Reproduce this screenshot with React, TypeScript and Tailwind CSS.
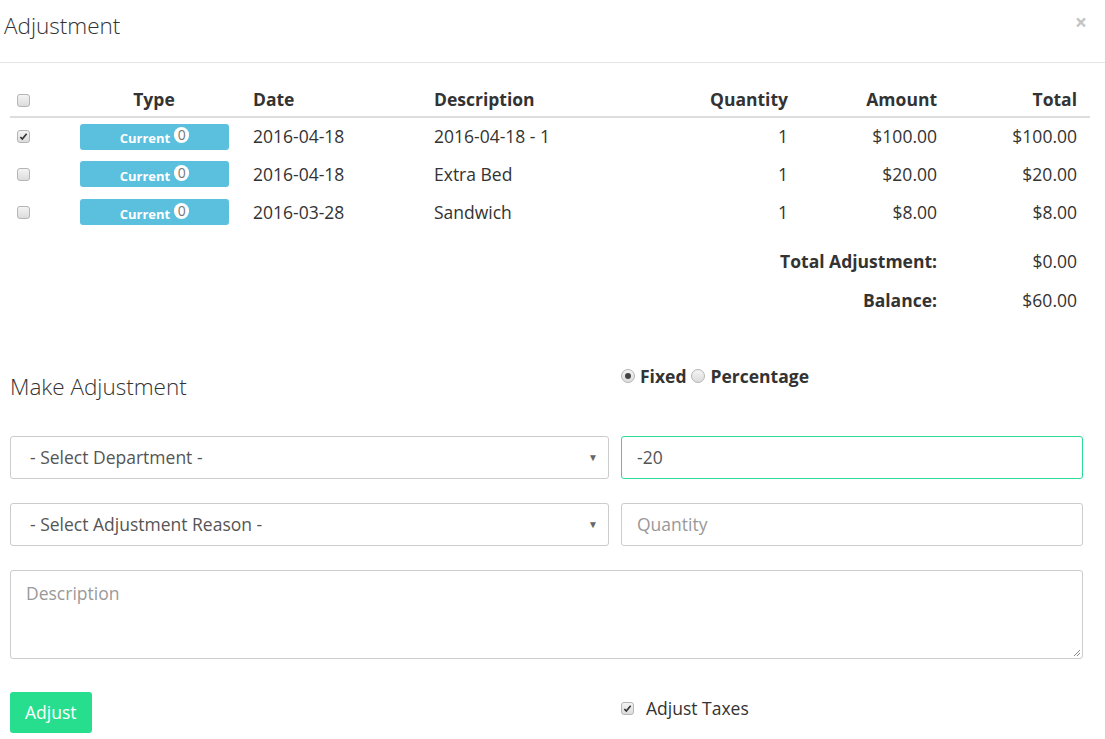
function Check({ checked }: { checked?: boolean }) {
  return (
    <span className="inline-flex h-[13px] w-[13px] items-center justify-center rounded-[3px] border border-[#b5b5b5] bg-gradient-to-b from-[#f4f4f4] to-[#dcdcdc]">
      {checked && (
        <svg width="9" height="9" viewBox="0 0 10 10">
          <path d="M1.5 5.5l2.2 2.3L8.5 2" fill="none" stroke="#333" strokeWidth="1.8" />
        </svg>
      )}
    </span>
  );
}

function Radio({ checked }: { checked?: boolean }) {
  return (
    <span className="inline-flex h-[14px] w-[14px] items-center justify-center rounded-full border border-[#b5b5b5] bg-gradient-to-b from-[#f4f4f4] to-[#dcdcdc]">
      {checked && <span className="h-[6px] w-[6px] rounded-full bg-[#444]" />}
    </span>
  );
}

const rows = [
  { checked: true, date: "2016-04-18", desc: "2016-04-18 - 1", qty: "1", amount: "$100.00", total: "$100.00" },
  { checked: false, date: "2016-04-18", desc: "Extra Bed", qty: "1", amount: "$20.00", total: "$20.00" },
  { checked: false, date: "2016-03-28", desc: "Sandwich", qty: "1", amount: "$8.00", total: "$8.00" },
];

function App() {
  return (
    <div className="min-h-screen w-full bg-white text-[#333] font-['Open_Sans',sans-serif]">
      {/* header */}
      <div className="flex h-[63px] items-start justify-between border-b border-[#e5e5e5] pl-[4px] pr-[18px]">
        <h4 className="pt-[10px] text-[22.5px] font-light leading-[32px] text-[#333]">Adjustment</h4>
        <span className="pt-[8px] text-[21px] font-bold leading-[28px] text-[#c4c4c4]">×</span>
      </div>

      <div className="pl-[10px] pr-[15px] pt-[20px]">
        <table className="w-[1080px] border-collapse text-[17.5px]">
          <thead>
            <tr className="h-[34px] border-b-2 border-[#ddd] font-bold">
              <th className="w-[60px] pl-[7px] text-left align-middle">
                <span className="flex pt-[2px]"><Check /></span>
              </th>
              <th className="w-[180px] pr-[12px] text-center">Type</th>
              <th className="w-[181px] pl-[3px] text-left">Date</th>
              <th className="w-[180px] pl-[3px] text-left">Description</th>
              <th className="w-[177px] text-right">Quantity</th>
              <th className="w-[149px] text-right">Amount</th>
              <th className="pr-[13px] text-right">Total</th>
            </tr>
          </thead>
          <tbody>
            {rows.map((r, i) => (
              <tr key={i} className="h-[38px]">
                <td className="pl-[7px]">
                  <span className="flex"><Check checked={r.checked} /></span>
                </td>
                <td className="pl-[10px]">
                  <span className="flex h-[26px] w-[149px] items-center justify-center rounded-[3px] bg-[#5bc0de] pt-[5px] text-[13px] font-bold text-white">
                    Current
                    <span className="ml-[4px] mb-[8px] flex h-[16px] min-w-[15px] items-center justify-center rounded-full bg-white px-[3px] text-[14px] font-normal leading-none text-[#777]">
                      0
                    </span>
                  </span>
                </td>
                <td className="pl-[3px]">{r.date}</td>
                <td className="pl-[3px]">{r.desc}</td>
                <td className="text-right">{r.qty}</td>
                <td className="text-right">{r.amount}</td>
                <td className="pr-[13px] text-right">{r.total}</td>
              </tr>
            ))}
            <tr className="h-[49px]">
              <td colSpan={6} className="pt-[11px] text-right font-bold">Total Adjustment:</td>
              <td className="pr-[13px] pt-[11px] text-right">$0.00</td>
            </tr>
            <tr className="h-[40px]">
              <td colSpan={6} className="text-right font-bold">Balance:</td>
              <td className="pr-[13px] text-right">$60.00</td>
            </tr>
          </tbody>
        </table>

        {/* make adjustment */}
        <div className="mt-[29px] flex">
          <div className="w-[611px]">
            <h4 className="pt-[23px] text-[22.5px] font-light leading-[30px] text-[#333]">Make Adjustment</h4>
          </div>
          <div className="flex items-center gap-[5px] text-[17.5px] font-bold leading-[22px]">
            <Radio checked />
            <span>Fixed</span>
            <Radio />
            <span>Percentage</span>
          </div>
        </div>

        <div className="mt-[34px] grid grid-cols-[599px_462px] gap-x-[12px] gap-y-[24px] text-[17.5px]">
          <div className="flex h-[43px] items-center justify-between rounded-[3px] border border-[#ccc] pl-[19px] pr-[10px] text-[#555]">
            <span>- Select Department -</span>
            <span className="text-[10px] text-[#666]">▼</span>
          </div>
          <div className="flex h-[43px] items-center rounded-[3px] border border-[#2ddc94] pl-[15px] text-[#555]">
            -20
          </div>
          <div className="flex h-[43px] items-center justify-between rounded-[3px] border border-[#ccc] pl-[19px] pr-[10px] text-[#555]">
            <span>- Select Adjustment Reason -</span>
            <span className="text-[10px] text-[#666]">▼</span>
          </div>
          <div className="flex h-[43px] items-center rounded-[3px] border border-[#ccc] pl-[15px] text-[#999]">
            Quantity
          </div>
          <div className="relative col-span-2 h-[89px] rounded-[3px] border border-[#ccc] pl-[15px] pt-[9px] text-[#999]">
            Description
            <svg className="absolute bottom-[1px] right-[1px]" width="8" height="8" viewBox="0 0 8 8">
              <path d="M7 1L1 7M7 4L4 7" stroke="#888" strokeWidth="1" />
            </svg>
          </div>
        </div>

        <div className="mt-[33px] flex items-center">
          <div className="w-[611px]">
            <button className="h-[41px] rounded-[3px] bg-[#26de8e] px-[15px] text-[17.5px] text-white">Adjust</button>
          </div>
          <div className="flex items-center gap-[12px] pb-[8px] text-[17.5px]">
            <Check checked />
            <span>Adjust Taxes</span>
          </div>
        </div>
      </div>
    </div>
  );
}

export default App;
